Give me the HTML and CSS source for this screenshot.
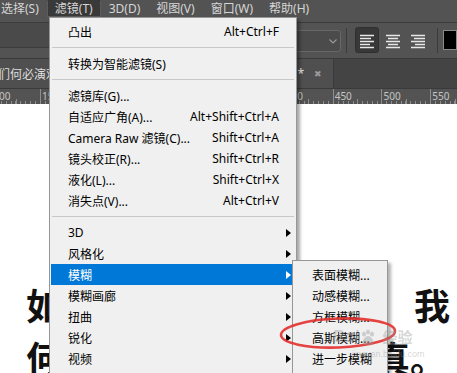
FILE: index.html
```html
<!DOCTYPE html>
<html>
	<head>
		<meta charset="UTF-8">
		<title>滤镜 - 模糊</title>
		<link rel="stylesheet" href="styles.css">
	</head>
	<body>
		<!-- 메뉴바 -->
		<div class="menubar">
			<span class="mb-item first">选择(S)</span>
			<span class="mb-item active">滤镜(T)</span>
			<span class="mb-item">3D(D)</span>
			<span class="mb-item">视图(V)</span>
			<span class="mb-item">窗口(W)</span>
			<span class="mb-item">帮助(H)</span>
		</div>

		<!-- 옵션바 -->
		<div class="optbar">
			<div class="opt-left"></div>
			<div class="opt-font">
				<svg width="8" height="5" viewBox="0 0 8 5"><path d="M0.5 0.5 L4 4 L7.5 0.5" fill="none" stroke="#9c9c9c" stroke-width="1.1"/></svg>
			</div>
			<div class="opt-sep"></div>
			<div class="align-btn on">
				<svg width="14" height="15" viewBox="0 0 14 15"><path d="M0 1.5H14M0 4.5H11M0 7.5H14M0 10.5H10M0 13.5H14" stroke="#e8e8e8" stroke-width="1.3"/></svg>
			</div>
			<div class="align-btn">
				<svg width="14" height="15" viewBox="0 0 14 15"><path d="M0 1.5H14M2 4.5H12M0 7.5H14M2 10.5H12M0 13.5H14" stroke="#e8e8e8" stroke-width="1.3"/></svg>
			</div>
			<div class="align-btn">
				<svg width="14" height="15" viewBox="0 0 14 15"><path d="M0 1.5H14M3 4.5H14M0 7.5H14M4 10.5H14M0 13.5H14" stroke="#e8e8e8" stroke-width="1.3"/></svg>
			</div>
			<div class="opt-sep second"></div>
			<div class="swatch"></div>
		</div>

		<!-- 문서 탭 -->
		<div class="tabbar">
			<div class="doc-tab">
				<span class="doc-name">我们何必演戏呢.psd @ 100%</span>
				<span class="doc-star">*</span>
				<span class="doc-close">✖</span>
			</div>
		</div>

		<!-- 눈금자 -->
		<div class="ruler">
			<span class="ruler-cell">100</span>
			<span class="ruler-cell">150</span>
			<span class="ruler-cell">200</span>
			<span class="ruler-cell">250</span>
			<span class="ruler-cell">300</span>
			<span class="ruler-cell">350</span>
			<span class="ruler-cell">400</span>
			<span class="ruler-cell">450</span>
			<span class="ruler-cell">500</span>
			<span class="ruler-cell">550</span>
		</div>

		<!-- 캔버스 -->
		<div class="canvas">
			<div class="canvas-text">
				<div class="line"><span>如</span><span>我</span></div>
				<div class="line"><span>何</span><span class="tail">真。</span></div>
			</div>
		</div>

		<!-- 滤镜 드롭다운 -->
		<div class="menu">
			<div class="menu-item"><span>凸出</span><span class="key">Alt+Ctrl+F</span></div>
			<div class="menu-sep"></div>
			<div class="menu-item"><span>转换为智能滤镜(S)</span></div>
			<div class="menu-sep"></div>
			<div class="menu-item"><span>滤镜库(G)...</span></div>
			<div class="menu-item"><span>自适应广角(A)...</span><span class="key">Alt+Shift+Ctrl+A</span></div>
			<div class="menu-item"><span>Camera Raw 滤镜(C)...</span><span class="key">Shift+Ctrl+A</span></div>
			<div class="menu-item"><span>镜头校正(R)...</span><span class="key">Shift+Ctrl+R</span></div>
			<div class="menu-item"><span>液化(L)...</span><span class="key">Shift+Ctrl+X</span></div>
			<div class="menu-item"><span>消失点(V)...</span><span class="key">Alt+Ctrl+V</span></div>
			<div class="menu-sep"></div>
			<div class="menu-item sub"><span>3D</span><i class="arrow"></i></div>
			<div class="menu-item sub"><span>风格化</span><i class="arrow"></i></div>
			<div class="menu-item sub hover"><span>模糊</span><i class="arrow"></i></div>
			<div class="menu-item sub"><span>模糊画廊</span><i class="arrow"></i></div>
			<div class="menu-item sub"><span>扭曲</span><i class="arrow"></i></div>
			<div class="menu-item sub"><span>锐化</span><i class="arrow"></i></div>
			<div class="menu-item sub"><span>视频</span><i class="arrow"></i></div>
		</div>

		<!-- 모糊 서브메뉴 -->
		<div class="submenu">
			<div class="menu-item"><span>表面模糊...</span></div>
			<div class="menu-item"><span>动感模糊...</span></div>
			<div class="menu-item"><span>方框模糊...</span></div>
			<div class="menu-item"><span>高斯模糊...</span></div>
			<div class="menu-item"><span>进一步模糊</span></div>
		</div>

		<!-- 빨간 동그라미 표시 -->
		<svg class="circle-mark" width="122" height="40" viewBox="0 0 122 40">
			<ellipse cx="60" cy="19" rx="57" ry="14.5" transform="rotate(-2 60 19)" fill="none" stroke="#e3302d" stroke-width="2.6" opacity="0.9"/>
		</svg>

		<!-- 워터마크 -->
		<div class="watermark">
			<div class="wm-top">
				<span class="wm-bai">Bai</span>
				<svg width="16" height="16" viewBox="0 0 16 16"><g fill="rgba(150,150,150,0.4)"><ellipse cx="4" cy="5" rx="2" ry="2.6"/><ellipse cx="8" cy="3" rx="2" ry="2.6"/><ellipse cx="12" cy="5" rx="2" ry="2.6"/><path d="M8 7c-3 0-5.5 4-5.5 6.5S5 16 8 16s5.5-0.5 5.5-2.5S11 7 8 7z"/></g></svg>
				<span class="wm-jy">经验</span>
			</div>
			<div class="wm-url">jingyan.baidu.com</div>
		</div>
	</body>
</html>
```
FILE: styles.css
```css
* { margin:0; padding:0; box-sizing:border-box; }
body { width:457px; height:373px; overflow:hidden; position:relative; background:#535353; font-family:"Noto Sans", "Noto Sans CJK SC", sans-serif; font-size:12px; }

/* 메뉴바 */
.menubar { display:flex; align-items:flex-start; height:22px; background:#535353; color:#d6d6d6; }
.mb-item { height:17px; line-height:15px; padding:0 7px; border:1px solid transparent; white-space:nowrap; }
.mb-item.first { margin-left:-7px; }
.mb-item.active { background:#393939; border-color:#5c5c5c; border-top-color:#393939; }

/* 옵션바 */
.optbar { display:flex; align-items:flex-start; height:36px; border-top:1px solid #3c3c3c; background:#535353; }
.opt-left { width:60px; height:25px; background:#4a4a4a; border-bottom:1px solid #3c3c3c; }
.opt-font { width:104px; height:22px; margin:7px 0 0 180px; border:1px solid #686868; border-radius:3px; background:#4b4b4b; display:flex; align-items:center; justify-content:flex-end; padding-right:3px; }
.opt-sep { width:1px; height:25px; margin:5px 7px 0 5px; background:#3b3b3b; }
.opt-sep.second { margin:5px 5px 0 7px; }
.align-btn { width:24px; height:26px; margin-top:4px; margin-left:2px; border:1px solid transparent; border-radius:3px; display:flex; align-items:center; justify-content:center; }
.align-btn svg { margin-top:2px; }
.align-btn.on { margin-left:1px; background:#383838; border-color:#2f2f2f; }
.swatch { width:14px; height:20px; margin-top:7px; background:#000; border:1px solid #8a8a8a; }

/* 탭 */
.tabbar { display:flex; height:30px; border-top:1px solid #3a3a3a; background:#444; }
.doc-tab { width:334px; display:flex; align-items:center; background:#4f4f4f; border-right:1px solid #3a3a3a; color:#dedede; padding-right:11px; }
.doc-name { margin-left:-14px; white-space:nowrap; }
.doc-star { margin-left:auto; color:#e8e8e8; }
.doc-close { margin-left:10px; color:#9a9a9a; font-size:9px; }

/* 눈금자 */
.ruler { display:flex; height:16px; border-top:1px solid #3a3a3a; background:#535353; overflow:hidden; }
.ruler-cell { flex:none; width:48.785px; padding-left:2px; font-size:10px; line-height:14px; color:#c4c4c4;
	background:
		linear-gradient(#8e8e8e, #8e8e8e) 0 0 / 1px 100% no-repeat,
		linear-gradient(#8e8e8e, #8e8e8e) 24.4px 100% / 1px 5px no-repeat,
		repeating-linear-gradient(to right, #8e8e8e 0 1px, transparent 1px 4.8785px) 0 100% / 100% 3px no-repeat; }
.ruler-cell:first-child { margin-left:-8.8px; }

/* 캔버스 */
.canvas { height:270px; background:#fff; }
.canvas-text { padding-top:174px; font-family:"Noto Sans CJK SC", sans-serif; font-size:36px; font-weight:700; line-height:53px; color:#111; }
.line { display:flex; justify-content:space-between; padding:0 7px 0 26px; }
.line .tail { margin-right:4px; }

/* 드롭다운 메뉴 */
.menu { position:absolute; left:49px; top:17px; width:248px; height:370px; padding-top:3px; background:#f0f0f0; border:1px solid #979797; box-shadow:3px 3px 3px rgba(0,0,0,.35); color:#000; }
.menu-item { display:flex; align-items:center; height:21px; padding:0 17px 0 18px; white-space:nowrap; }
.menu-item .key { margin-left:auto; }
.menu-item.sub { padding-right:5px; }
.menu-item.hover { background:#0078d7; color:#fff; margin:0 1px 0 1px; padding-left:17px; padding-right:4px; }
.arrow { margin-left:auto; width:0; height:0; border-left:5px solid #000; border-top:4px solid transparent; border-bottom:4px solid transparent; }
.menu-item.hover .arrow { border-left-color:#fff; }
.menu-sep { height:11px; display:flex; align-items:center; padding:0 2px; }
.menu-sep::before { content:""; flex:1; height:1px; background:#c8c8c8; }

.submenu { position:absolute; left:292px; top:260px; width:96px; height:120px; padding-top:3px; background:#f0f0f0; border:1px solid #979797; box-shadow:3px 3px 3px rgba(0,0,0,.3); }
.submenu .menu-item { padding-left:19px; padding-right:0; }

/* 표시 */
.circle-mark { position:absolute; left:278px; top:314px; }

.watermark { position:absolute; left:332px; top:326px; color:rgba(150,150,150,.4); }
.wm-top { display:flex; align-items:center; gap:2px; }
.wm-bai { font-family:"Liberation Sans", sans-serif; font-size:17px; font-weight:700; font-style:italic; }
.wm-jy { margin-left:4px; font-family:"Noto Sans CJK SC", sans-serif; font-size:15px; font-weight:700; }
.wm-url { margin:2px 0 0 20px; font-family:"Liberation Sans", sans-serif; font-size:9px; }
```
